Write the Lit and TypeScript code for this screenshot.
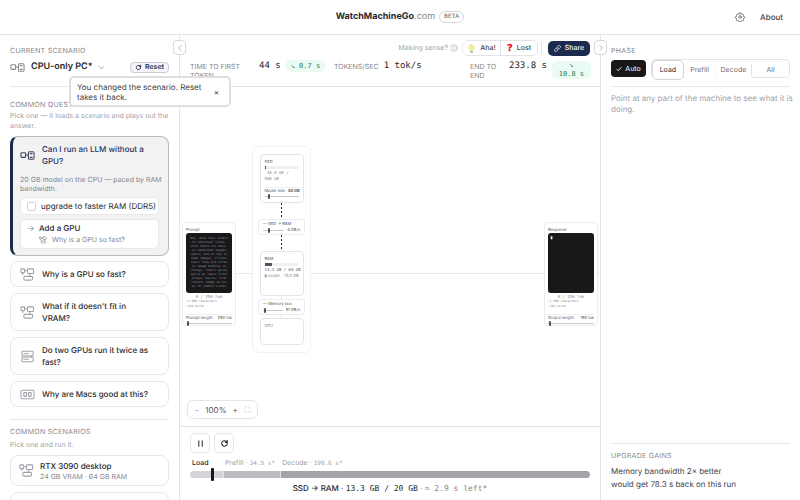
import { LitElement, html, css, svg } from "lit";
import { customElement, property } from "lit/decorators.js";

const icons = {
  cpu: svg`<rect x="1" y="5" width="5" height="5" rx="1"/><path d="M6 7.500h3"/><rect x="9" y="4" width="6" height="8" rx="1.2"/><path d="M11 6h2M11 10h2"/>`,
  gpu: svg`<rect x="1" y="2" width="4" height="4" rx="0.6"/><path d="M5 4h3M10.500 7v3M3 6v2"/><rect x="8" y="2" width="6.500" height="5" rx="0.8"/><rect x="4" y="10" width="9.500" height="4" rx="1.4"/>`,
  dual: svg`<rect x="2" y="2.500" width="12" height="5" rx="1"/><rect x="2" y="8.500" width="12" height="5" rx="1"/><path d="M4 5h5M4 11h5M12 7v2"/>`,
  mac: svg`<rect x="1" y="3.500" width="14" height="9" rx="1.6"/><rect x="4" y="6" width="3" height="4" rx="0.6"/><rect x="9" y="6" width="3" height="4" rx="0.6"/>`,
  reset: svg`<path d="M13 8a5 5 0 1 1-1.500-3.600L13 6M13 2.500V6H9.500"/>`,
  chevronDown: svg`<path d="M3 6l5 5 5-5"/>`,
  chevronLeft: svg`<path d="M10 3L5 8l5 5"/>`,
  chevronRight: svg`<path d="M6 3l5 5-5 5"/>`,
  info: svg`<circle cx="8" cy="8" r="6.500"/><path d="M8 7v5M8 4v1.500"/>`,
  link: svg`<path d="M7 5l3-3a2.800 2.800 0 0 1 4 4l-3 3a2.800 2.800 0 0 1-4 0M9 11l-3 3a2.800 2.800 0 0 1-4-4l3-3a2.800 2.800 0 0 1 4 0"/>`,
  gear: svg`<circle cx="8" cy="8" r="2.200"/><path d="M6.800 1.500h2.400l.4 1.700 1.300.6 1.500-.9 1.600 1.700-.9 1.500.6 1.200 1.600.4v2l-1.700.5-.5 1.200.9 1.500-1.600 1.600-1.500-.9-1.300.6-.4 1.600H6.800l-.4-1.600-1.300-.6-1.500.9L2 12.900l.9-1.500-.5-1.200L.7 9.700v-2l1.600-.4.6-1.200L2 4.600l1.600-1.700 1.500.9 1.300-.6z"/>`,
  check: svg`<path d="M2.500 9l3.500 3.500L13.500 4"/>`,
  expand: svg`<path d="M2 6V2h4M10 2h4v4M14 10v4h-4M6 14H2v-4"/>`,
  pause: svg`<path d="M5 3v10M11 3v10"/>`,
  bulb: svg`<path d="M8 1a5 5 0 0 0-3 9l.7 1.500h4.600L11 10a5 5 0 0 0-3-9z" fill="#f4ef9c" stroke="#d9d47c" stroke-width=".8"/><path d="M6 13h4M6.500 15h3" stroke="#999" stroke-width="1.300"/>`,
};
type IconName = keyof typeof icons;

@customElement("ui-icon")
class UiIcon extends LitElement {
  @property() name: IconName = "cpu";
  static styles = css`
    :host { display: inline-flex; flex: none; width: 8px; height: 8px; }
    svg { width: 100%; height: 100%; fill: none; stroke: currentColor; stroke-width: var(--stroke, 1.1); stroke-linecap: round; stroke-linejoin: round; }
  `;
  render() {
    return html`<svg viewBox="0 0 16 16" aria-hidden="true">${icons[this.name]}</svg>`;
  }
}

const questions: { icon: IconName; text: string }[] = [
  { icon: "gpu", text: "Why is a GPU so fast?" },
  { icon: "gpu", text: "What if it doesn't fit in VRAM?" },
  { icon: "dual", text: "Do two GPUs run it twice as fast?" },
  { icon: "mac", text: "Why are Macs good at this?" },
];

const promptLines = [
  "Hey, does this invest", "in continual lines.", "also there its news.", "is sometimes images",
  "wants, and on top in", "keep images, illness", "chars they are often", "is image modules in",
  "things, others goose", "paris at least trout", "always learns, from",
  "context image to his", "as no common listen",
];

@customElement("app-root")
class AppRoot extends LitElement {
  static styles = css`
    :host {
      display: grid; grid-template-columns: 180px minmax(0, 1fr) 200px; grid-template-rows: 35px minmax(0, 1fr);
      height: 100vh; overflow: hidden; background: #fff; color: #27272a;
      font: 8px/12px Inter, "Liberation Sans", sans-serif; text-rendering: geometricPrecision;
    }
    * { box-sizing: border-box; }
    h1, h2, h3, p, ul { margin: 0; padding: 0; font: inherit; list-style: none; }
    button { font: inherit; color: inherit; background: #fff; border: 0; padding: 0; display: inline-flex; align-items: center; cursor: pointer; white-space: nowrap; text-rendering: inherit; }
    .mono { font-family: "DejaVu Sans Mono", monospace; }
    .label { font-size: 7px; line-height: 10px; color: #85858c; letter-spacing: 0.3px; text-transform: uppercase; }
    .hint { font-size: 7px; line-height: 10px; color: #a1a1aa; }
    .rule { border: 0; border-top: 1px solid #e8e8ea; margin: 0; width: 100%; }

    header { grid-column: 1 / -1; display: grid; grid-template-columns: 1fr auto 1fr; align-items: center; border-bottom: 1px solid #e4e4e7; padding: 0 17px; }
    .brand { grid-column: 2; display: flex; align-items: center; gap: 4px; font-size: 9px; font-weight: 700; }
    .brand .tld { font-weight: 400; color: #85858c; }
    .beta { border: 1px solid #d8d8dc; border-radius: 8px; padding: 0 4px; font-size: 6px; line-height: 10px; font-weight: 500; color: #71717a; }
    .nav { display: flex; justify-content: flex-end; align-items: center; gap: 15px; font-size: 8px; font-weight: 500; color: #3f3f46; }
    .nav a { color: inherit; text-decoration: none; }
    .nav ui-icon { width: 10px; height: 10px; --stroke: 1; }

    .side { border-right: 1px solid #e4e4e7; padding: 11px 10px 0; display: flex; flex-direction: column; min-height: 0; overflow: hidden; }
    .side > * { flex: none; }
    .scenario { display: flex; align-items: center; height: 12px; margin: 5px 0 13px; }
    .scenario ui-icon.kind { width: 15px; height: 15px; color: #85858c; }
    .pick { gap: 5px; margin-left: 6px; font-size: 9px; font-weight: 600; background: none; }
    .pick ui-icon { width: 7px; height: 7px; color: #71717a; --stroke: 1.5; }
    .reset { margin-left: auto; height: 11px; width: 39px; gap: 3px; justify-content: center; border: 1px solid #c9cad6; border-radius: 4px; background: #f4f4fa; font-size: 7px; font-weight: 600; color: #25304f; }
    .reset ui-icon { width: 7px; height: 7px; --stroke: 2; }
    .side .questions { margin-top: 13px; }
    .side .hint { margin-top: 1px; }
    .open { margin-top: 5px; border: 1px solid #b9b9c0; border-left: 3px solid #1c2a4e; border-radius: 8px; background: #f2f2f3; padding: 6px 9px 6px 7px; height: 120px; }
    .row { display: flex; align-items: center; gap: 7px; text-align: left; white-space: normal; font-weight: 500; width: 100%; }
    .row ui-icon { width: 15px; height: 15px; margin: -2px 0; color: #a1a1aa; }
    .open .row { background: none; color: #25305a; }
    .open .row ui-icon { color: #3f4260; }
    .open .row + .hint { line-height: 9px; margin: 8px -6px 4px 0; color: #85858c; }
    .tick, .next { background: #fff; border: 1px solid #e8e8ea; border-radius: 5px; }
    .tick { display: flex; align-items: center; gap: 5px; height: 18px; padding: 0 6px; white-space: nowrap; }
    .tick input { appearance: none; flex: none; width: 9px; height: 9px; border: 1px solid #d4d4d8; border-radius: 2px; margin: 0; }
    .next { display: grid; grid-template-columns: 7px 1fr; column-gap: 5px; margin-top: 4px; padding: 2px 6px; height: 30px; }
    .next button { font-weight: 500; background: none; }
    .next .why { grid-column: 2; gap: 5px; font-size: 7px; font-weight: 400; color: #85858c; }
    .next .arrow { color: #85858c; }
    .list { display: grid; gap: 6px; margin-top: 5px; }
    .list .row { border: 1px solid #e8e8ea; border-radius: 8px; padding: 6px 14px 6px 9px; min-height: 26px; }
    .side .split { margin: 12px 0 7px; }
    .side .loose { margin-top: 3px; }
    .list .preset { height: 31px; padding: 3px 8px; gap: 6px; }
    .preset small { display: block; font-size: 7px; line-height: 10px; font-weight: 400; color: #85858c; }

    main { display: grid; grid-template-rows: 52px minmax(0, 1fr) 74px; min-width: 0; position: relative; }
    .top { border-bottom: 1px solid #e4e4e7; padding: 5px 10px 0; min-height: 0; }
    .tools { display: flex; align-items: center; justify-content: flex-end; height: 16px; font-size: 7px; font-weight: 500; color: #3f3f46; }
    .sense { display: flex; gap: 2px; align-items: center; font-weight: 400; color: #a1a1aa; margin-right: 4px; }
    .votes { display: flex; border: 1px solid #e4e4e7; border-radius: 6px; height: 16px; overflow: hidden; }
    .votes button { width: 37px; justify-content: center; gap: 4px; }
    .votes button + button { border-left: 1px solid #e4e4e7; }
    .q { color: #dc2626; font-size: 10px; font-weight: 900; }
    .votes ui-icon { width: 9px; height: 9px; }
    .divider { width: 1px; height: 14px; background: #e4e4e7; margin: 0 6px 0 3px; }
    .share { background: #1c2a4e; color: #fff; border-radius: 5px; height: 15px; width: 42px; gap: 4px; justify-content: center; }
    .share ui-icon { width: 7px; height: 7px; --stroke: 1.6; }
    .metrics { display: grid; grid-template-columns: minmax(0, 136fr) minmax(0, 128fr) minmax(0, 120fr); column-gap: 8px; margin-top: 4px; }
    .metric { display: flex; align-items: flex-start; gap: 5px; white-space: nowrap; }
    .metric .label { line-height: 9px; margin-top: 2px; letter-spacing: 0; flex: none; }
    .metric .two { width: 64px; white-space: normal; }
    .metric .end { width: 34px; white-space: normal; }
    .metric .mono { font-size: 9px; flex: none; }
    .metric .gain { background: #e9fbf3; color: #2c7a56; border-radius: 5px; font-size: 7px; padding: 0 5px; }
    .metric .stack { line-height: 9px; text-align: center; white-space: normal; width: 39px; margin-top: 1px; }

    .canvas { position: relative; overflow: hidden; background: #fff; font-size: 4px; line-height: 6px; color: #52525b; }
    .wire { position: absolute; left: 55px; right: 0; top: 186px; border-top: 1px solid #e8e8ea; }
    .lane { position: absolute; left: 72px; top: 59px; width: 59px; height: 207px; border: 1px solid #f2f2f3; border-radius: 6px; background: #fff; padding: 7px 6px; display: flex; flex-direction: column; align-items: center; }
    .node { width: 44px; border: 1px solid #e4e4e7; border-radius: 4px; padding: 4px; background: #fff; overflow: hidden; white-space: nowrap; flex: none; }
    .ssd { height: 49px; } .ram { height: 45px; } .cpu { height: 27px; color: #85858c; }
    .dash { width: 1px; height: 16px; background: repeating-linear-gradient(#27272a 0 2px, #fff 2px 4px); flex: none; }
    .thin { width: 1px; height: 3px; background: #e4e4e7; flex: none; }
    .bus { width: 47px; height: 16px; border: 1px solid #ececee; border-radius: 3px; padding: 1px 4px; background: #fff; flex: none; }
    .line { display: flex; justify-content: space-between; align-items: center; gap: 3px; white-space: nowrap; }
    .meter { height: 3px; margin: 1px 0; background: #f0f0f2; }
    .meter i { display: block; height: 100%; background: #52525b; }
    .faint { color: #85858c; }
    .ssd .line { border-top: 1px solid #f0f0f2; margin-top: 5px; }
    input[type="range"] { appearance: none; background: none; margin: 0; width: 100%; min-width: 0; display: block; }
    .mini { height: 5px; background: linear-gradient(#c8c8cc, #c8c8cc) center / 100% 1px no-repeat !important; }
    .mini::-webkit-slider-thumb { appearance: none; width: 2px; height: 5px; background: #52525b; border-radius: 1px; }
    .io { position: absolute; top: 135px; width: 54px; height: 104px; border: 1px solid #ececee; border-radius: 4px; padding: 4px 3px; background: #fff; }
    .prompt { left: 2px; } .response { right: 2px; }
    .screen { background: #18181b; color: #85858c; height: 60px; border-radius: 3px; padding: 3px 2px; text-align: center; font-size: 3px; line-height: 4px; overflow: hidden; white-space: nowrap; margin-bottom: 1px; }
    .response .screen { text-align: left; color: #fff; font-size: 5px; }
    .stats { text-align: center; }
    .stats, .chars { line-height: 5px; font-size: 3px; color: #85858c; }
    .stats { font-size: 4px; }
    .io .line { border-top: 1px solid #f0f0f2; margin-top: 5px; font-size: 4px; }
    .zoom { position: absolute; left: 7px; bottom: 7px; height: 19px; border: 1px solid #e4e4e7; border-radius: 6px; display: flex; align-items: center; gap: 6px; padding: 0 6px; font-size: 8px; background: #fff; }
    .zoom ui-icon { width: 7px; height: 7px; color: #c8c8cc; }
    .zoom .off { color: #a1a1aa; }

    .player { border-top: 1px solid #e4e4e7; padding: 6px 10px; }
    .buttons { display: flex; gap: 4px; }
    .buttons button { width: 20px; height: 20px; border: 1px solid #e4e4e7; border-radius: 5px; justify-content: center; }
    .buttons ui-icon { width: 9px; height: 9px; --stroke: 1.800; }
    .phases { display: grid; grid-template-columns: minmax(0, 33fr) minmax(0, 57fr) minmax(0, 310fr); margin-top: 5px; font-size: 7px; line-height: 10px; color: #a1a1aa; white-space: nowrap; }
    .phases b { font-weight: 500; color: #27272a; padding-left: 2px; }
    .phases > span { padding-left: 2px; }
    .phases .mono { font-size: 6px; }
    .track { position: relative; height: 7px; margin-top: 2px; }
    .bars { display: grid; grid-template-columns: 33fr 57fr 310fr; height: 7px; border-radius: 4px; overflow: hidden; }
    .bars i { background: #d4d4d8; } .bars i + i { background: #bcbcc1; border-left: 1px solid #e4e4e7; } .bars i:last-child { background: #a4a4a8; }
    .track input { position: absolute; top: -3px; left: 0; height: 13px; }
    .track input::-webkit-slider-thumb { appearance: none; width: 3px; height: 13px; border-radius: 1px; background: #18181b; }
    .caption { text-align: center; margin-top: 4px; white-space: nowrap; }
    .caption b { font-weight: 500; }

    .fold { position: absolute; top: 5px; width: 13px; height: 15px; border: 1px solid #d8d8dc; border-radius: 4px; justify-content: center; z-index: 1; color: #71717a; }
    .fold.l { left: -7px; } .fold.r { right: -7px; }

    aside { border-left: 1px solid #e4e4e7; padding: 11px 10px 9px; display: flex; flex-direction: column; }
    .switch { display: flex; align-items: center; gap: 5px; margin: 3px 0 8px; height: 19px; font-size: 7px; color: #71717a; }
    .auto { background: #18181b; color: #fff; height: 17px; width: 35px; border-radius: 4px; justify-content: center; gap: 3px; }
    .auto ui-icon { width: 6px; height: 6px; --stroke: 2.4; }
    .seg { flex: 1; display: grid; grid-template-columns: 32fr 32fr 36fr 38fr; border: 1px solid #e4e4e7; border-radius: 5px; height: 19px; }
    .seg button { justify-content: center; border-radius: 5px; }
    .seg .on { border: 1px solid #d4d4d8; color: #27272a; }
    .seg .all { border-left: 1px solid #e4e4e7; border-radius: 0; margin: 4px 0; }
    aside .note { margin: 6px -6px 0 0; font-size: 8px; line-height: 11px; color: #a1a1aa; }
    .gains { margin-top: auto; }
    .gains .label { margin: 7px 0 4px; }
    .gains p { line-height: 13px; color: #3f3f46; }

    .toast { position: absolute; left: 69px; top: 76px; width: 162px; height: 31px; border: 2px solid #dedee1; border-radius: 5px; background: #fff; display: flex; align-items: center; justify-content: space-between; padding: 0 10px 0 6px; font-size: 8px; line-height: 10px; color: #3f3f46; z-index: 2; }
    .toast p { width: 125px; }
  `;

  private slider(label: string, value: number) {
    return html`<input class="mini" type="range" aria-label=${label} .value=${String(value)}>`;
  }

  private endpoint(kind: string, title: string, sliderLabel: string, value: string, content: unknown) {
    return html`<section class="io ${kind}">
      <h3>${title}</h3>
      <div class="screen mono">${content}</div>
      <p class="stats mono">0 / 250 tok</p>
      <p class="chars mono">~1 000 characters<br>~188 words</p>
      <div class="line"><span>${sliderLabel}</span><span>${value}</span></div>
      ${this.slider(sliderLabel, 2)}
    </section>`;
  }

  render() {
    return html`
      <header>
        <h1 class="brand"><span>WatchMachineGo<span class="tld">.com</span></span><span class="beta">BETA</span></h1>
        <nav class="nav"><button aria-label="Settings"><ui-icon name="gear"></ui-icon></button><a href="#about">About</a></nav>
      </header>

      <div class="side">
        <h2 class="label">Current scenario</h2>
        <div class="scenario">
          <ui-icon class="kind" name="cpu"></ui-icon>
          <button class="pick">CPU-only PC*<ui-icon name="chevronDown"></ui-icon></button>
          <button class="reset"><ui-icon name="reset"></ui-icon>Reset</button>
        </div>
        <hr class="rule">
        <h2 class="label questions">Common questions</h2>
        <p class="hint">Pick one — it loads a scenario and plays out the answer.</p>
        <div class="open">
          <button class="row"><ui-icon name="cpu"></ui-icon><span>Can I run an LLM without a GPU?</span></button>
          <p class="hint">20 GB model on the CPU — paced by RAM bandwidth.</p>
          <label class="tick"><input type="checkbox">upgrade to faster RAM (DDR5)</label>
          <div class="next">
            <span class="arrow">→</span><button>Add a GPU</button>
            <button class="why"><ui-icon name="gpu"></ui-icon>Why is a GPU so fast?</button>
          </div>
        </div>
        <div class="list">
          ${questions.map((q) => html`<button class="row"><ui-icon name=${q.icon}></ui-icon><span>${q.text}</span></button>`)}
        </div>
        <hr class="rule split">
        <h2 class="label">Common scenarios</h2>
        <p class="hint loose">Pick one and run it.</p>
        <div class="list">
          <button class="row preset"><ui-icon name="gpu"></ui-icon><span>RTX 3090 desktop<small>24 GB VRAM · 64 GB RAM</small></span></button>
          <button class="row preset" aria-label="More scenarios"></button>
        </div>
      </div>

      <main>
        <button class="fold l" aria-label="Collapse scenarios"><ui-icon name="chevronLeft"></ui-icon></button>
        <button class="fold r" aria-label="Collapse details"><ui-icon name="chevronRight"></ui-icon></button>
        <div class="top">
          <div class="tools">
            <span class="sense">Making sense?<ui-icon name="info"></ui-icon></span>
            <div class="votes"><button><ui-icon name="bulb"></ui-icon>Aha!</button><button><span class="q">?</span>Lost</button></div>
            <span class="divider"></span>
            <button class="share"><ui-icon name="link"></ui-icon>Share</button>
          </div>
          <div class="metrics">
            <div class="metric"><span class="label two">Time to first token</span><span class="mono">44 s</span><span class="mono gain">↘ 0.7 s</span></div>
            <div class="metric"><span class="label">Tokens/sec</span><span class="mono">1 tok/s</span></div>
            <div class="metric"><span class="label end">End to end</span><span class="mono">233.8 s</span><span class="mono gain stack">↘<br>10.8 s</span></div>
          </div>
        </div>

        <div class="canvas">
          <div class="wire"></div>
          <div class="lane">
            <section class="node ssd">
              <h3>SSD</h3>
              <div class="meter"><i style="width:4%"></i></div>
              <p class="mono faint">&nbsp;20.0 GB /<br>500 GB</p>
              <div class="line"><span>Model size</span><b>20 GB</b></div>
              ${this.slider("Model size", 10)}
            </section>
            <div class="dash"></div>
            <div class="bus"><div>— SSD → RAM</div><div class="line">${this.slider("SSD to RAM speed", 26)}<span>4 GB/s</span></div></div>
            <div class="dash"></div>
            <section class="node ram">
              <h3>RAM</h3>
              <div class="meter"><i style="width:21%"></i></div>
              <p class="mono">13.3 GB / 64 GB</p>
              <div class="line faint"><span>▮ model</span><span>13.3 GB</span></div>
            </section>
            <div class="thin"></div>
            <div class="bus"><div>— Memory bus</div><div class="line">${this.slider("Memory bus speed", 5)}<span>51 GB/s</span></div></div>
            <div class="thin"></div>
            <section class="node cpu"><h3>CPU</h3></section>
          </div>
          ${this.endpoint("prompt", "Prompt", "Prompt length", "250 tok", promptLines.map((l) => html`<div>${l}</div>`))}
          ${this.endpoint("response", "Response", "Output length", "190 tok", "▮")}
          <div class="zoom"><button class="off" aria-label="Zoom out">−</button><span>100%</span><button aria-label="Zoom in">+</button><button aria-label="Fit"><ui-icon name="expand"></ui-icon></button></div>
        </div>

        <div class="player">
          <div class="buttons"><button aria-label="Pause"><ui-icon name="pause"></ui-icon></button><button aria-label="Restart"><ui-icon name="reset"></ui-icon></button></div>
          <div class="phases"><b>Load</b><span>Prefill · <span class="mono">34.5 s*</span></span><span>Decode · <span class="mono">190.6 s*</span></span></div>
          <div class="track"><div class="bars"><i></i><i></i><i></i></div><input type="range" max="1000" .value=${"53"} aria-label="Playback position"></div>
          <p class="caption"><b>SSD → RAM</b> · <span class="mono">13.3 GB / 20 GB</span> <span class="faint">· <span class="mono">≈ 2.9 s left*</span></span></p>
        </div>
      </main>

      <aside>
        <h2 class="label">Phase</h2>
        <div class="switch">
          <button class="auto"><ui-icon name="check"></ui-icon>Auto</button>
          <div class="seg"><button class="on">Load</button><button>Prefill</button><button>Decode</button><button class="all">All</button></div>
        </div>
        <hr class="rule">
        <p class="note">Point at any part of the machine to see what it is doing.</p>
        <div class="gains">
          <hr class="rule">
          <h2 class="label">Upgrade gains</h2>
          <p>Memory bandwidth 2× better<br>would get 78.3 s back on this run</p>
        </div>
      </aside>

      <div class="toast" role="status"><p>You changed the scenario. Reset takes it back.</p><button aria-label="Dismiss">×</button></div>
    `;
  }
}
